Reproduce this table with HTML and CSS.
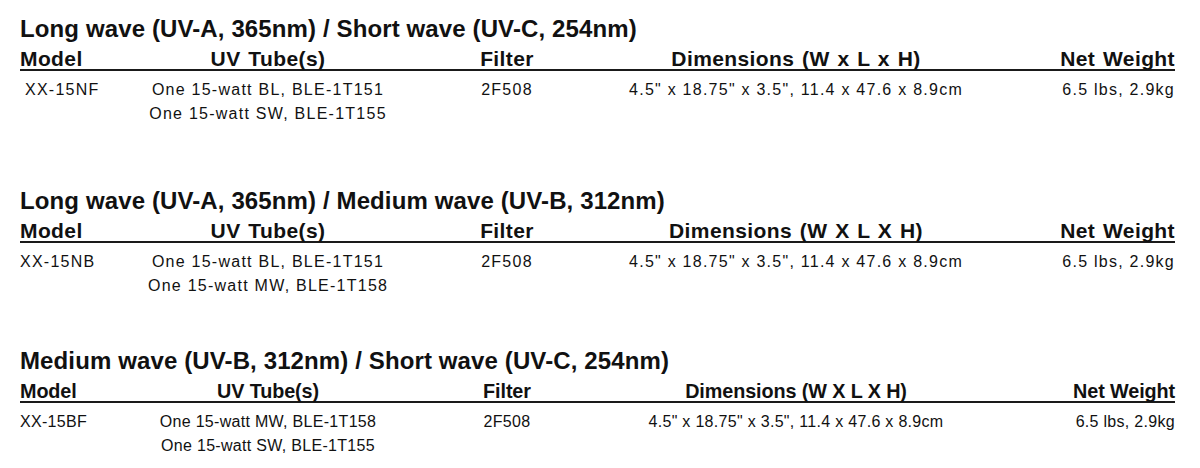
FILE: index.html
```html
<!DOCTYPE html>
<html>
<head>
<meta charset="utf-8">
<link rel="stylesheet" href="styles.css">
</head>
<body>
<div class="page">
  <section class="spec spec-first">
    <h2 class="spec-title">Long wave (UV-A, 365nm) / Short wave (UV-C, 254nm)</h2>
    <div class="spec-grid">
      <div class="hd c-model">Model</div>
      <div class="hd c-tube">UV Tube(s)</div>
      <div class="hd c-filter">Filter</div>
      <div class="hd c-dim">Dimensions (W x L x H)</div>
      <div class="hd c-weight">Net Weight</div>
      <div class="td c-model indent">XX-15NF</div>
      <div class="td c-tube">One 15-watt BL, BLE-1T151<br>One 15-watt SW, BLE-1T155</div>
      <div class="td c-filter">2F508</div>
      <div class="td c-dim">4.5" x 18.75" x 3.5", 11.4 x 47.6 x 8.9cm</div>
      <div class="td c-weight">6.5 lbs, 2.9kg</div>
    </div>
  </section>

  <section class="spec spec-second">
    <h2 class="spec-title">Long wave (UV-A, 365nm) / Medium wave (UV-B, 312nm)</h2>
    <div class="spec-grid">
      <div class="hd c-model">Model</div>
      <div class="hd c-tube">UV Tube(s)</div>
      <div class="hd c-filter">Filter</div>
      <div class="hd c-dim">Dimensions (W X L X H)</div>
      <div class="hd c-weight">Net Weight</div>
      <div class="td c-model">XX-15NB</div>
      <div class="td c-tube">One 15-watt BL, BLE-1T151<br>One 15-watt MW, BLE-1T158</div>
      <div class="td c-filter">2F508</div>
      <div class="td c-dim">4.5" x 18.75" x 3.5", 11.4 x 47.6 x 8.9cm</div>
      <div class="td c-weight">6.5 lbs, 2.9kg</div>
    </div>
  </section>

  <section class="spec spec-compact">
    <h2 class="spec-title">Medium wave (UV-B, 312nm) / Short wave (UV-C, 254nm)</h2>
    <div class="spec-grid">
      <div class="hd c-model">Model</div>
      <div class="hd c-tube">UV Tube(s)</div>
      <div class="hd c-filter">Filter</div>
      <div class="hd c-dim">Dimensions (W X L X H)</div>
      <div class="hd c-weight">Net Weight</div>
      <div class="td c-model">XX-15BF</div>
      <div class="td c-tube">One 15-watt MW, BLE-1T158<br>One 15-watt SW, BLE-1T155</div>
      <div class="td c-filter">2F508</div>
      <div class="td c-dim">4.5" x 18.75" x 3.5", 11.4 x 47.6 x 8.9cm</div>
      <div class="td c-weight">6.5 lbs, 2.9kg</div>
    </div>
  </section>
</div>
</body>
</html>
```

FILE: styles.css
```css
html, body {
  margin: 0;
  padding: 0;
  background: #ffffff;
}

body {
  font-family: "Liberation Sans", Arial, Helvetica, sans-serif;
  color: #111111;
}

.page {
  width: 1155px;
  margin-left: 20px;
  padding-top: 15px;
}

.spec-title {
  margin: 0;
  font-size: 24px;
  line-height: 28px;
  font-weight: bold;
  letter-spacing: 0.12px;
}

.spec-grid {
  display: grid;
  grid-template-columns: 128px 240px 238px 340px 209px;
  margin-top: 6px;
}

.hd {
  font-size: 21px;
  line-height: 20px;
  font-weight: bold;
  letter-spacing: 0.4px;
  word-spacing: 1.5px;
  border-bottom: 2px solid #1a1a1a;
  white-space: nowrap;
}

.td {
  font-size: 16px;
  line-height: 23.5px;
  letter-spacing: 1.25px;
  padding-top: 7px;
  white-space: nowrap;
}

.c-model { text-align: left; }
.c-tube, .c-filter, .c-dim { text-align: center; }
.c-weight { text-align: right; }

.indent { padding-left: 5px; }

.spec-first { margin-bottom: 62px; }
.spec-second { margin-bottom: 50px; }

.spec-compact .hd {
  font-size: 19.8px;
  letter-spacing: -0.1px;
  word-spacing: 0;
}

.spec-compact .td {
  letter-spacing: 0.3px;
}
```
